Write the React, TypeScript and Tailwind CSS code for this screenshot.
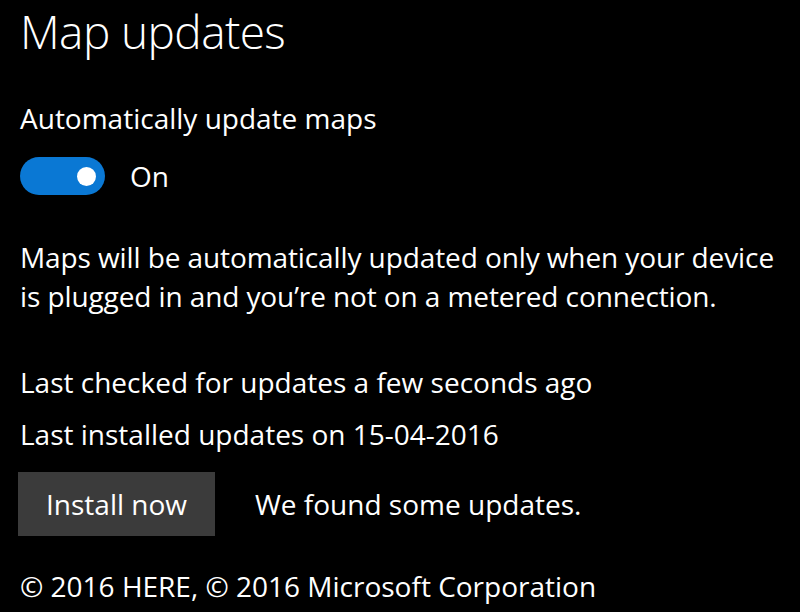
import { useState } from 'react';

export default function App() {
  const [auto, setAuto] = useState(true);

  return (
    <div
      className="w-[800px] h-[612px] overflow-hidden bg-black text-white px-5"
      style={{ fontFamily: '"Open Sans", "Noto Sans", sans-serif' }}
    >
      <h1 className="text-[46px] font-light leading-[60px] pt-[1px] tracking-[-0.6px]">Map updates</h1>

      <div className="mt-[38px] text-[28px] leading-[38px]">Automatically update maps</div>

      <div className="mt-[20px] flex items-center gap-[25px]">
        <button
          onClick={() => setAuto(!auto)}
          className={`w-[85px] h-[38px] rounded-full flex items-center px-[9px] ${
            auto ? 'bg-[#0a78d4] justify-end' : 'bg-[#333] justify-start'
          }`}
        >
          <span className="w-[19px] h-[19px] rounded-full bg-white" />
        </button>
        <span className="text-[28px] leading-[38px]">{auto ? 'On' : 'Off'}</span>
      </div>

      <p className="mt-[43px] text-[28px] leading-[39px] tracking-[-0.1px]">
        Maps will be automatically updated only when your device is plugged in and you’re not on a metered connection.
      </p>

      <div className="mt-[47px] text-[28px] leading-[38px]">Last checked for updates a few seconds ago</div>
      <div className="mt-[14px] text-[28px] leading-[38px]">Last installed updates on 15-04-2016</div>

      <div className="mt-[19px] flex items-center">
        <button className="w-[197px] h-[64px] -ml-[2px] bg-[#3b3b3b] text-[28px] leading-[38px]">Install now</button>
        <span className="ml-[40px] text-[28px] leading-[38px]">We found some updates.</span>
      </div>

      <div className="mt-[31px] text-[28px] leading-[38px]">© 2016 HERE, © 2016 Microsoft Corporation</div>
    </div>
  );
}
